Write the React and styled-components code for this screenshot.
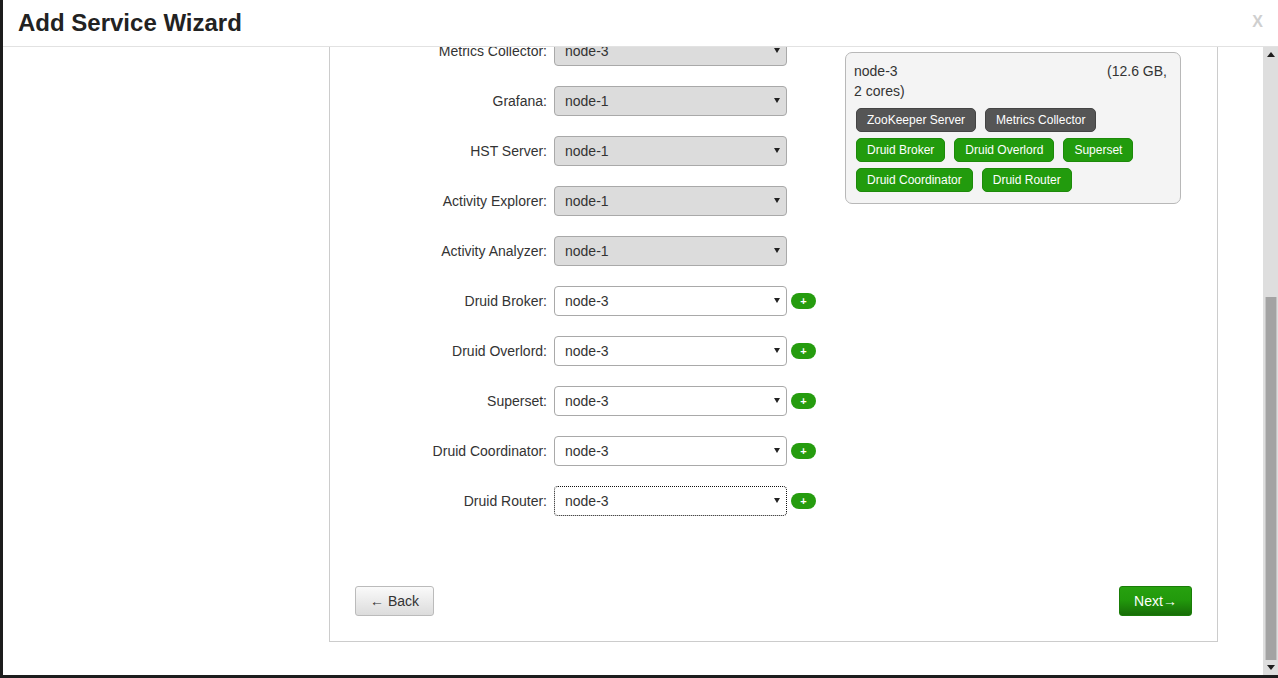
import React, { useLayoutEffect, useRef, useState } from 'react'
import styled, { createGlobalStyle } from 'styled-components'

const GlobalStyle = createGlobalStyle`
html, body {
  margin: 0;
  height: 100%;
  overflow: hidden;
  background: #1d1d1d;
  font-family: "Liberation Sans", Arial, sans-serif;
}
`

const steps = [
    'Choose Services',
    'Assign Masters',
    'Assign Slaves and Clients',
    'Customize Services',
    'Review',
    'Install, Start and Test',
    'Summary',
]

const rows = [
    { label: 'NameNode', host: 'node-1', locked: true },
    { label: 'SNameNode', host: 'node-2', locked: true },
    { label: 'History Server', host: 'node-1', locked: true },
    { label: 'App Timeline Server', host: 'node-1', locked: true },
    { label: 'ResourceManager', host: 'node-1', locked: true },
    { label: 'ZooKeeper Server', host: 'node-2', locked: true },
    { label: 'ZooKeeper Server', host: 'node-3', locked: true },
    { label: 'Metrics Collector', host: 'node-3', locked: true },
    { label: 'Grafana', host: 'node-1', locked: true },
    { label: 'HST Server', host: 'node-1', locked: true },
    { label: 'Activity Explorer', host: 'node-1', locked: true },
    { label: 'Activity Analyzer', host: 'node-1', locked: true },
    { label: 'Druid Broker', host: 'node-3' },
    { label: 'Druid Overlord', host: 'node-3' },
    { label: 'Superset', host: 'node-3' },
    { label: 'Druid Coordinator', host: 'node-3' },
    { label: 'Druid Router', host: 'node-3', focused: true },
]

// each inner array is one line of component tags; "+" marks a newly added one
const hosts = [
    {
        name: 'node-1', mem: '15.5 GB', cores: 4,
        lines: [
            ['NameNode', 'ResourceManager', 'Grafana'],
            ['History Server', 'App Timeline Server'],
            ['HST Server', 'Activity Explorer'],
            ['Activity Analyzer'],
        ],
    },
    {
        name: 'node-2', mem: '12.6 GB', cores: 2,
        lines: [
            ['SNameNode', 'ZooKeeper Server'],
            ['Hive Metastore', 'HiveServer2'],
            ['Spark History Server'],
        ],
    },
    {
        name: 'node-3', mem: '12.6 GB', cores: 2,
        lines: [
            ['ZooKeeper Server', 'Metrics Collector'],
            ['+Druid Broker', '+Druid Overlord', '+Superset'],
            ['+Druid Coordinator', '+Druid Router'],
        ],
    },
]

const App = () => {
    const bodyRef = useRef(null)
    const trackRef = useRef(null)
    const [thumb, setThumb] = useState({ top: 0, height: 0 })

    useLayoutEffect(() => {
        const el = bodyRef.current
        const track = trackRef.current
        if (!el || !track) return
        el.scrollTop = el.scrollHeight
        const trackH = track.clientHeight
        const height = Math.round(trackH * el.clientHeight / el.scrollHeight)
        const range = el.scrollHeight - el.clientHeight
        const top = range > 0 ? Math.round((trackH - height) * el.scrollTop / range) : 0
        setThumb({ top, height })
    }, [])

    return <>
        <GlobalStyle />
        <Modal>
            <Header>
                <Title>Add Service Wizard</Title>
                <Close>X</Close>
            </Header>
            <BodyRow>
                <Body ref={bodyRef}>
                    <Layout>
                        <StepNav>
                            {steps.map((s, i) => <Step key={s} $active={i === 1}>{s}</Step>)}
                        </StepNav>
                        <Panel>
                            <Columns>
                                <FormCol>
                                    {rows.map((r, i) => (
                                        <Row key={i}>
                                            <Label>{r.label}:</Label>
                                            <SelectWrap>
                                                <Select defaultValue={r.host} disabled={r.locked} $focused={r.focused}>
                                                    <option>node-1</option>
                                                    <option>node-2</option>
                                                    <option>node-3</option>
                                                </Select>
                                                <Caret />
                                            </SelectWrap>
                                            {!r.locked && <AddButton>+</AddButton>}
                                        </Row>
                                    ))}
                                </FormCol>
                                <HostCol>
                                    {hosts.map(h => (
                                        <HostBox key={h.name}>
                                            <HostInfo>
                                                <HostName>{h.name}</HostName>({h.mem}, {h.cores} cores)
                                            </HostInfo>
                                            <Tags>
                                                {h.lines.map((line, i) => (
                                                    <TagLine key={i}>
                                                        {line.map(t => t.startsWith('+')
                                                            ? <Tag key={t} $new>{t.slice(1)}</Tag>
                                                            : <Tag key={t}>{t}</Tag>)}
                                                    </TagLine>
                                                ))}
                                            </Tags>
                                        </HostBox>
                                    ))}
                                </HostCol>
                            </Columns>
                            <ButtonBar>
                                <BackButton>← Back</BackButton>
                                <NextButton>Next→</NextButton>
                            </ButtonBar>
                        </Panel>
                    </Layout>
                </Body>
                <ScrollBar>
                    <ScrollArrow $dir="up" />
                    <Track ref={trackRef}>
                        <Thumb style={{ top: thumb.top, height: thumb.height }} />
                    </Track>
                    <ScrollArrow $dir="down" />
                </ScrollBar>
            </BodyRow>
        </Modal>
    </>
}

const Modal = styled.div`
margin-left: 3px;
height: 675px;
background: #fff;
display: flex;
flex-direction: column;
`

const Header = styled.div`
height: 46px;
flex: none;
border-bottom: 1px solid #e2e2e2;
display: flex;
align-items: center;
justify-content: space-between;
padding: 0 15px 0 15px;
`

const Title = styled.h3`
margin: 0;
font-size: 24px;
font-weight: bold;
color: #222;
`

const Close = styled.span`
font-size: 16px;
font-weight: bold;
color: #cfcfcf;
margin-top: -2px;
`

const BodyRow = styled.div`
flex: 1;
min-height: 0;
display: flex;
`

const Body = styled.div`
flex: 1;
overflow: hidden;
`

const ScrollBar = styled.div`
width: 15px;
flex: none;
display: flex;
flex-direction: column;
background: #dedede;
`

const ScrollArrow = styled.div`
height: 15px;
flex: none;
display: flex;
align-items: center;
justify-content: center;

&::before {
  content: '';
  width: 0;
  height: 0;
  border-left: 4px solid transparent;
  border-right: 4px solid transparent;
  ${p => p.$dir === 'up' ? 'border-bottom: 5px solid #1e1e1e;' : 'border-top: 5px solid #1e1e1e;'}
}
`

const Track = styled.div`
flex: 1;
position: relative;
`

const Thumb = styled.div`
position: absolute;
left: 2px;
right: 1px;
background: #a3a3a3;
border-left: 1px solid #c4c4c4;
border-right: 1px solid #c4c4c4;
box-sizing: border-box;
`

const Layout = styled.div`
display: grid;
grid-template-columns: 290px 889px;
column-gap: 16px;
align-items: start;
padding: 20px 0 33px 20px;
`

const StepNav = styled.ul`
list-style: none;
margin: 0;
padding: 0;
`

const Step = styled.li`
padding: 8px 12px;
font-size: 14px;
color: ${p => p.$active ? '#fff' : '#333'};
background: ${p => p.$active ? '#239a0d' : 'transparent'};
`

const Panel = styled.div`
border: 1px solid #cccccc;
padding: 25px;
`

const Columns = styled.div`
display: flex;
align-items: flex-start;
`

const FormCol = styled.div`
width: 490px;
display: flex;
flex-direction: column;
gap: 20px;
`

const Row = styled.div`
display: flex;
align-items: center;
height: 30px;
`

const Label = styled.label`
width: 192px;
margin-right: 7px;
text-align: right;
font-size: 14px;
color: #333;
`

const SelectWrap = styled.div`
position: relative;
width: 233px;
height: 30px;
`

const Select = styled.select`
appearance: none;
width: 100%;
height: 100%;
box-sizing: border-box;
margin: 0;
padding: 0 20px 0 10px;
font-family: inherit;
font-size: 14px;
color: #333;
background: #fff;
border: 1px ${p => p.$focused ? 'dotted #111' : 'solid #a9a9a9'};
border-radius: 4px;
outline: none;

&:disabled {
  background: #dcdcdc;
  color: #333;
  opacity: 1;
}
`

const Caret = styled.span`
position: absolute;
right: 7px;
top: 12px;
width: 0;
height: 0;
border-left: 3px solid transparent;
border-right: 3px solid transparent;
border-top: 5px solid #222;
pointer-events: none;
`

const AddButton = styled.span`
margin-left: 4px;
width: 25px;
height: 16px;
border-radius: 8px;
background: #259c0e;
color: #fff;
font-size: 11px;
font-weight: bold;
display: flex;
align-items: center;
justify-content: center;
`

const HostCol = styled.div`
width: 336px;
display: flex;
flex-direction: column;
gap: 16px;
`

const HostBox = styled.div`
background: #f4f4f4;
border: 1px solid #b8b8b8;
border-radius: 7px;
padding: 8px 8px 11px 8px;
`

const HostInfo = styled.div`
font-size: 14px;
line-height: 20px;
color: #333;
`

const HostName = styled.span`
display: inline-block;
width: 253px;
`

const Tags = styled.div`
display: flex;
flex-direction: column;
gap: 6px;
margin-top: 7px;
padding-left: 2px;
`

const TagLine = styled.div`
display: flex;
gap: 9px;
`

const Tag = styled.span`
height: 24px;
box-sizing: border-box;
padding: 0 10px;
border-radius: 5px;
border: 1px solid ${p => p.$new ? '#1d8a0a' : '#444'};
background: ${p => p.$new ? '#229b0d' : '#555'};
color: #fff;
font-size: 12px;
line-height: 23px;
white-space: nowrap;
`

const ButtonBar = styled.div`
display: flex;
justify-content: space-between;
margin-top: 70px;
`

const Button = styled.button`
height: 30px;
box-sizing: border-box;
border-radius: 3px;
font-family: inherit;
font-size: 14px;
padding: 0 14px;
margin: 0;
`

const BackButton = styled(Button)`
width: 79px;
color: #333;
background: linear-gradient(#fafafa, #dcdcdc);
border: 1px solid #bbb;
`

const NextButton = styled(Button)`
width: 73px;
color: #fff;
background: linear-gradient(#27a10f 0%, #229a0c 45%, #176d07 100%);
border: 1px solid #1a7d08;
`

export default App
